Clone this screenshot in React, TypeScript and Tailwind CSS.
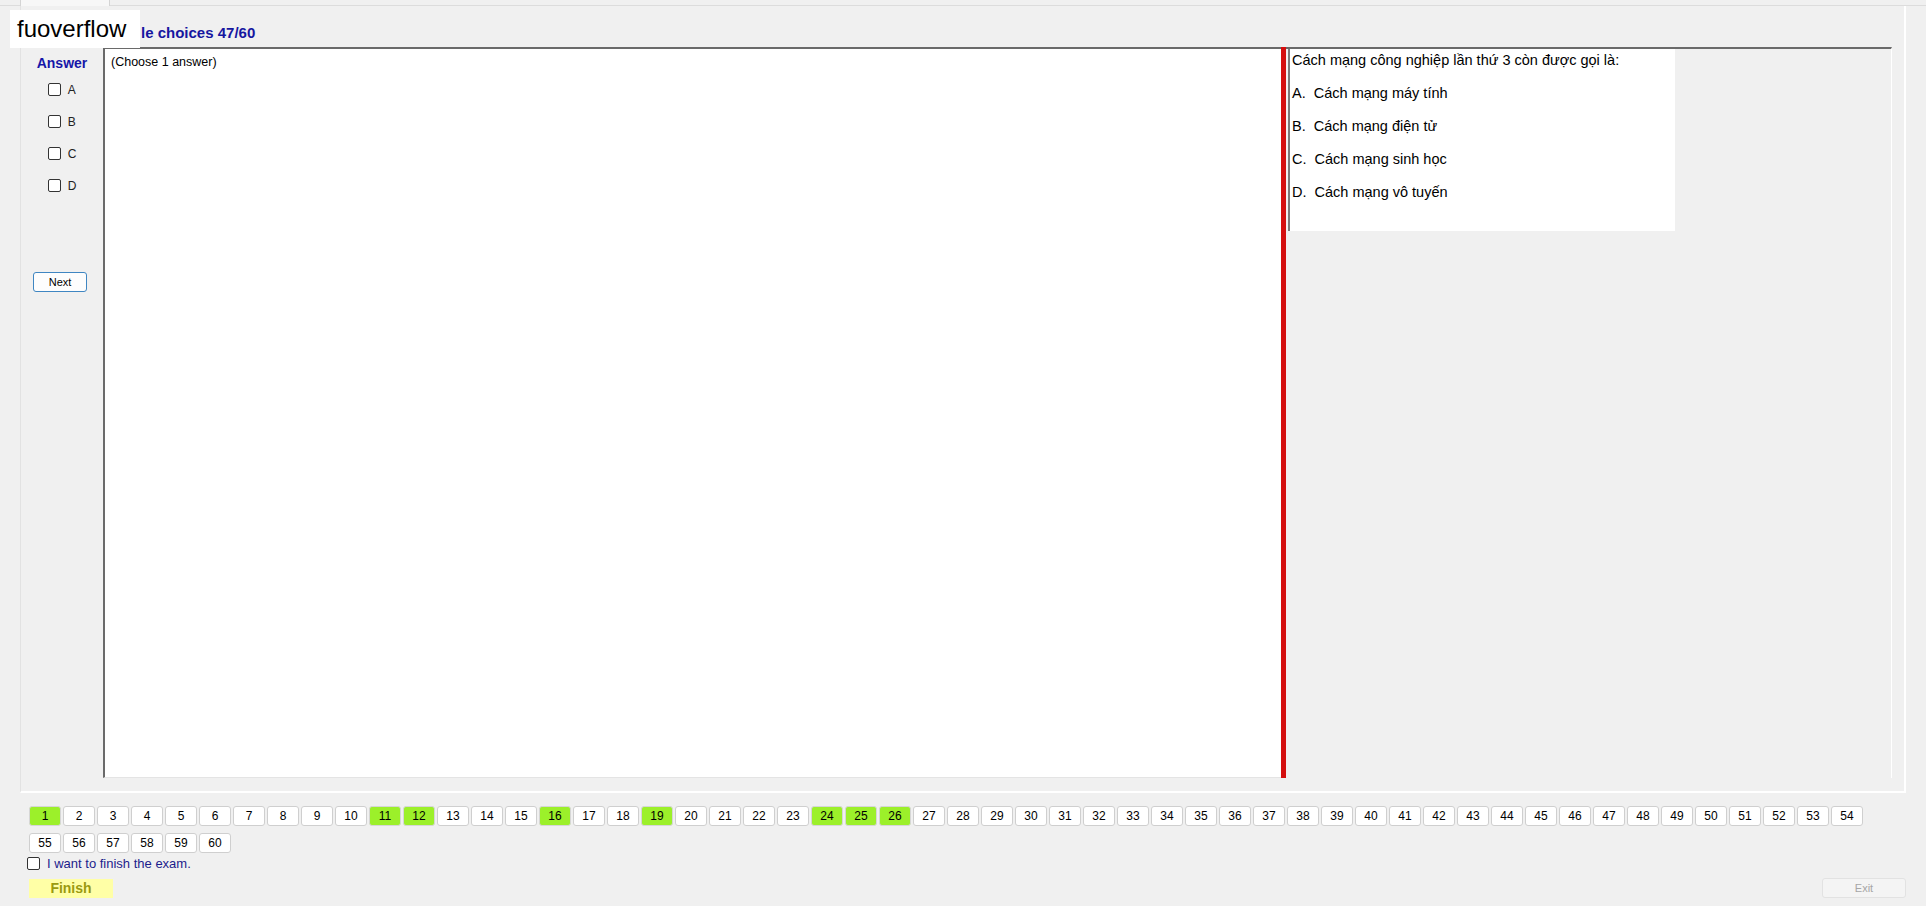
import React from 'react';

const GREEN = new Set([1, 11, 12, 16, 19, 24, 25, 26]);
const NUMS = Array.from({ length: 60 }, (_, i) => i + 1);

const OPTIONS = [
  'A.  Cách mạng máy tính',
  'B.  Cách mạng điện tử',
  'C.  Cách mạng sinh học',
  'D.  Cách mạng vô tuyến',
];

function Box() {
  return <div className="w-[13px] h-[13px] border border-[#333] rounded-[2px] bg-white shrink-0" />;
}

export default function App() {
  return (
    <div
      className="relative w-[1926px] h-[906px] bg-[#f0f0f0] overflow-hidden flex flex-col text-black"
      style={{ fontFamily: '"Liberation Sans", Arial, sans-serif' }}
    >
      {/* tab strip */}
      <div className="h-[6px] flex border-b border-[#dcdcdc] shrink-0">
        <div className="ml-[20px] w-[90px] h-[6px] bg-[#f7f7f7] border-x border-[#d4d4d4]" />
      </div>

      {/* group panel */}
      <div className="ml-[20px] w-[1886px] h-[787px] border-l border-[#e2e2e2] border-r-2 border-b-2 border-r-white border-b-white flex flex-col shrink-0">
        {/* title, its start hidden under the label */}
        <div className="h-[41px] pt-[15px] pl-[120px] shrink-0">
          <span className="text-[15px] font-bold text-[#1616a0] leading-[18px]">le choices 47/60</span>
        </div>

        <div className="flex h-[731px] shrink-0">
          {/* answer column */}
          <div className="w-[82px] flex flex-col items-center shrink-0">
            <div className="text-[14px] font-bold text-[#1616a8] mt-[6px]">Answer</div>
            <div className="flex flex-col gap-[19px] mt-[9px]">
              {['A', 'B', 'C', 'D'].map((l) => (
                <div key={l} className="flex items-center gap-[7px] h-[13px]">
                  <Box />
                  <span className="text-[12px] text-[#222]">{l}</span>
                </div>
              ))}
            </div>
            <button className="mt-[80px] mr-[4px] w-[54px] h-[20px] rounded-[3px] border border-[#3f86c2] bg-[#fdfdfd] text-[11px] text-black">
              Next
            </button>
          </div>

          {/* question area */}
          <div className="w-[1178px] bg-white border-l-2 border-t-2 border-l-[#6a6a6a] border-t-[#6a6a6a] border-b border-b-[#e4e4e4] shrink-0">
            <div className="text-[12.5px] pl-[6px] pt-[4px]">(Choose 1 answer)</div>
          </div>

          <div className="w-[5px] bg-[#d40f0f] shrink-0" />

          {/* right content */}
          <div className="w-[606px] border-t-2 border-t-[#6a6a6a] border-r border-r-white pl-[2px] shrink-0">
            <div className="w-[387px] h-[182px] bg-white border-l-2 border-l-[#7a7a7a] pl-[2px] text-[14.5px] flex flex-col">
              <div className="leading-[23px]">Cách mạng công nghiệp lần thứ 3 còn được gọi là:</div>
              <div className="mt-[5px] leading-[33px]">
                {OPTIONS.map((o) => (
                  <div key={o} className="whitespace-pre">{o}</div>
                ))}
              </div>
            </div>
          </div>
        </div>
      </div>

      {/* question number buttons */}
      <div className="ml-[29px] w-[1840px] mt-[13px] flex flex-wrap gap-x-[2px] gap-y-[7px]">
        {NUMS.map((n) => (
          <div
            key={n}
            className={`w-[32px] h-[20px] rounded-[3px] border flex items-center justify-center text-[12px] ${
              GREEN.has(n) ? 'bg-[#9cf02a] border-[#d6d6d6]' : 'bg-white border-[#cfcfcf]'
            }`}
          >
            {n}
          </div>
        ))}
      </div>

      <div className="ml-[27px] mt-[4px] flex items-center gap-[7px] h-[13px]">
        <Box />
        <span className="text-[13px] text-[#1c1c8c]">I want to finish the exam.</span>
      </div>

      <div className="flex items-center justify-between mt-[8px] pl-[29px] pr-[20px]">
        <div className="w-[84px] h-[19px] bg-[#ffffa6] flex items-center justify-center text-[14px] font-bold text-[#9a9a10]">
          Finish
        </div>
        <div className="w-[84px] h-[20px] bg-[#f4f4f4] border border-[#e2e2e2] rounded-[3px] flex items-center justify-center text-[11px] text-[#a6a6a6]">
          Exit
        </div>
      </div>

      {/* watermark label */}
      <div className="absolute left-[10px] top-[10px] w-[130px] h-[38px] bg-white flex items-center pl-[7px]">
        <span className="text-[24px] text-black">fuoverflow</span>
      </div>
    </div>
  );
}
